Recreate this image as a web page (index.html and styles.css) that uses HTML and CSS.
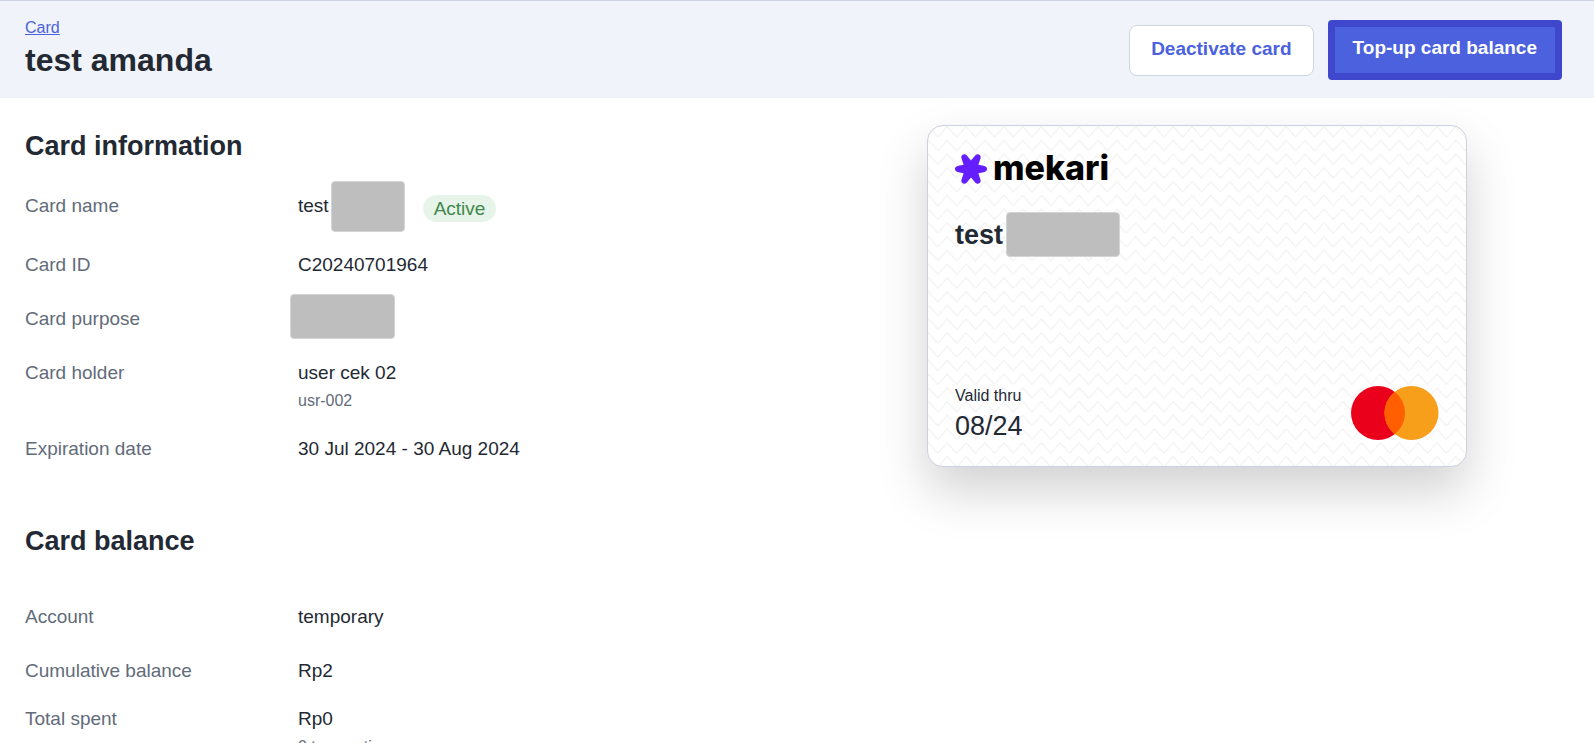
FILE: index.html
```html
<!DOCTYPE html>
<html lang="en">
<head>
  <meta charset="UTF-8">
  <title>Card detail</title>
  <link rel="stylesheet" href="styles.css">
</head>
<body>
  <header class="page-header">
    <div>
      <a class="breadcrumb" href="#">Card</a>
      <h1>test amanda</h1>
    </div>
    <div class="actions">
      <button class="btn" type="button">Deactivate card</button>
      <button class="btn btn-primary" type="button">Top-up card balance</button>
    </div>
  </header>

  <main class="content">
    <div class="details">
      <section class="info">
        <h2>Card information</h2>
        <dl>
          <div class="row row-name">
            <dt>Card name</dt>
            <dd>test <span class="redacted redacted-name"></span> <span class="badge">Active</span></dd>
          </div>
          <div class="row">
            <dt>Card ID</dt>
            <dd>C20240701964</dd>
          </div>
          <div class="row">
            <dt>Card purpose</dt>
            <dd><span class="redacted redacted-purpose"></span></dd>
          </div>
          <div class="row">
            <dt>Card holder</dt>
            <dd>user cek 02 <small>usr-002</small></dd>
          </div>
          <div class="row">
            <dt>Expiration date</dt>
            <dd>30 Jul 2024 - 30 Aug 2024</dd>
          </div>
        </dl>
      </section>

      <section class="balance">
        <h2>Card balance</h2>
        <dl>
          <div class="row">
            <dt>Account</dt>
            <dd>temporary</dd>
          </div>
          <div class="row">
            <dt>Cumulative balance</dt>
            <dd>Rp2</dd>
          </div>
          <div class="row">
            <dt>Total spent</dt>
            <dd>Rp0 <small>0 transaction</small></dd>
          </div>
        </dl>
      </section>
    </div>

    <div class="card">
      <svg class="card-pattern" aria-hidden="true">
        <defs>
          <pattern id="zigzag" x="-9.5" y="0" width="18.83" height="13.75" patternUnits="userSpaceOnUse">
            <path d="M-9.4 0.5 L0.6 11 L10 0.5 L19.43 11 L28.83 0.5" fill="none" stroke="#f2f2f4" stroke-width="1.2"/>
          </pattern>
        </defs>
        <rect width="100%" height="100%" fill="url(#zigzag)"/>
      </svg>
      <div class="card-top">
        <div class="logo">
          <svg width="32" height="30" viewBox="0 0 32 30" aria-hidden="true">
            <path fill="#651fff" d="M16 6.5 L20.4 1.2 C22.4 -1 26.4 0.6 25.6 4 L23.4 10.8 L28.6 11.8 C33.2 12.8 33.2 17.2 28.6 18.2 L23.4 19.2 L25.6 26 C26.4 29.4 22.4 31 20.4 28.8 L16 23.5 L11.6 28.8 C9.6 31 5.6 29.4 6.4 26 L8.6 19.2 L3.4 18.2 C-1.2 17.2 -1.2 12.8 3.4 11.8 L8.6 10.8 L6.4 4 C5.6 0.6 9.6 -1 11.6 1.2 Z"/>
          </svg>
          <span>mekari</span>
        </div>
        <div class="card-name">test <span class="redacted redacted-card"></span></div>
      </div>
      <div class="card-bottom">
        <div class="valid">
          <span>Valid thru</span>
          <strong>08/24</strong>
        </div>
        <svg width="88" height="54" viewBox="0 0 88 54" role="img" aria-label="Mastercard">
          <circle cx="27" cy="27" r="27" fill="#eb001b"/>
          <circle cx="60.5" cy="27" r="27" fill="#f79e1b"/>
          <path fill="#ff5f00" d="M43.75 5.8 A27 27 0 0 1 43.75 48.2 A27 27 0 0 1 43.75 5.8 Z"/>
        </svg>
      </div>
    </div>
  </main>
</body>
</html>
```
FILE: styles.css
```css
* {
  box-sizing: border-box;
}
body {
  margin: 0;
  height: 100vh;
  overflow: hidden;
  font-family: "Liberation Sans", Arial, sans-serif;
  font-size: 19px;
  line-height: 24px;
  color: #232933;
  background-color: #fff;
}
h1, h2, dl, dd {
  margin: 0;
}

/* header */
.page-header {
  display: flex;
  justify-content: space-between;
  align-items: flex-start;
  padding: 15px 32px 18px 25px;
  border-top: 1px solid #cbd4e0;
  background-color: #f0f3f9;
}
.breadcrumb {
  display: block;
  font-size: 16px;
  color: #4b61dd;
}
h1 {
  font-size: 32px;
  line-height: 40px;
}
.actions {
  display: flex;
  align-items: center;
  gap: 14px;
  padding-top: 4px;
}
.btn {
  height: 51px;
  padding: 0 21px 2px;
  border: 1px solid #d0d6dd;
  border-radius: 8px;
  background-color: #fff;
  color: #4b61dd;
  font-family: inherit;
  font-size: 19px;
  font-weight: bold;
  cursor: pointer;
}
.btn-primary {
  height: 60px;
  padding: 0 18px 4px;
  border: 7px solid #3f47cc;
  border-radius: 4px;
  background-color: #4b61dd;
  color: #fff;
}

/* content */
.content {
  display: grid;
  grid-template-columns: 1fr 1fr;
  align-items: start;
  gap: 6px;
}
.details {
  padding: 32px 0 0 25px;
}
h2 {
  font-size: 27px;
  line-height: 32px;
}
.info dl {
  margin-top: 32px;
}
.balance {
  margin-top: 64px;
}
.balance dl {
  margin-top: 48px;
}
.row {
  display: flex;
  margin-bottom: 30px;
}
.balance .row:nth-child(2) {
  margin-bottom: 24px;
}
dt {
  width: 273px;
  color: #626b79;
}
dd small {
  display: block;
  font-size: 16px;
  line-height: 21px;
  padding-top: 5px;
  margin-bottom: -4px;
  color: #626b79;
}
.row-name {
  height: 29px;
}
.row-name dd {
  display: flex;
  align-items: flex-start;
}
.badge {
  margin: 1px 0 0 18px;
  padding: 0 11px;
  border-radius: 14px;
  line-height: 27px;
  background-color: #e6f4ea;
  color: #41884a;
}
.redacted {
  display: block;
  border: 1px solid #d4d4d4;
  border-radius: 4px;
  background-color: #bebebe;
}
.redacted-name {
  width: 74px;
  height: 51px;
  margin: -13px 0 0 2px;
}
.redacted-purpose {
  width: 105px;
  height: 45px;
  margin: -13px 0 -8px -8px;
}
.redacted-card {
  width: 114px;
  height: 45px;
}

/* payment card */
.card {
  position: relative;
  justify-self: center;
  display: flex;
  flex-direction: column;
  justify-content: space-between;
  width: 100%;
  max-width: 540px;
  min-height: 342px;
  margin-top: 27px;
  padding: 24px 27px 22px;
  border: 1px solid #cbd1e0;
  border-radius: 16px;
  background-color: #fff;
  box-shadow: 0 24px 50px rgba(0, 0, 0, 0.18);
}
.card-pattern {
  position: absolute;
  inset: 0;
  width: 100%;
  height: 100%;
  border-radius: 15px;
}
.card-top,
.card-bottom {
  position: relative;
}
.logo {
  display: flex;
  align-items: center;
  gap: 6px;
  color: #000;
  font-family: Inter, sans-serif;
  font-size: 34px;
  font-weight: 800;
  line-height: 36px;
}
.logo svg {
  margin-top: 2px;
}
.card-name {
  display: flex;
  align-items: center;
  gap: 3px;
  margin-top: 26px;
  font-size: 27px;
  font-weight: bold;
}
.card-bottom {
  display: flex;
  justify-content: space-between;
  align-items: flex-end;
}
.card-bottom svg {
  margin-bottom: 4px;
}
.valid span,
.valid strong {
  display: block;
}
.valid span {
  font-size: 16px;
}
.valid strong {
  font-size: 27px;
  font-weight: normal;
  line-height: 36px;
}
```
